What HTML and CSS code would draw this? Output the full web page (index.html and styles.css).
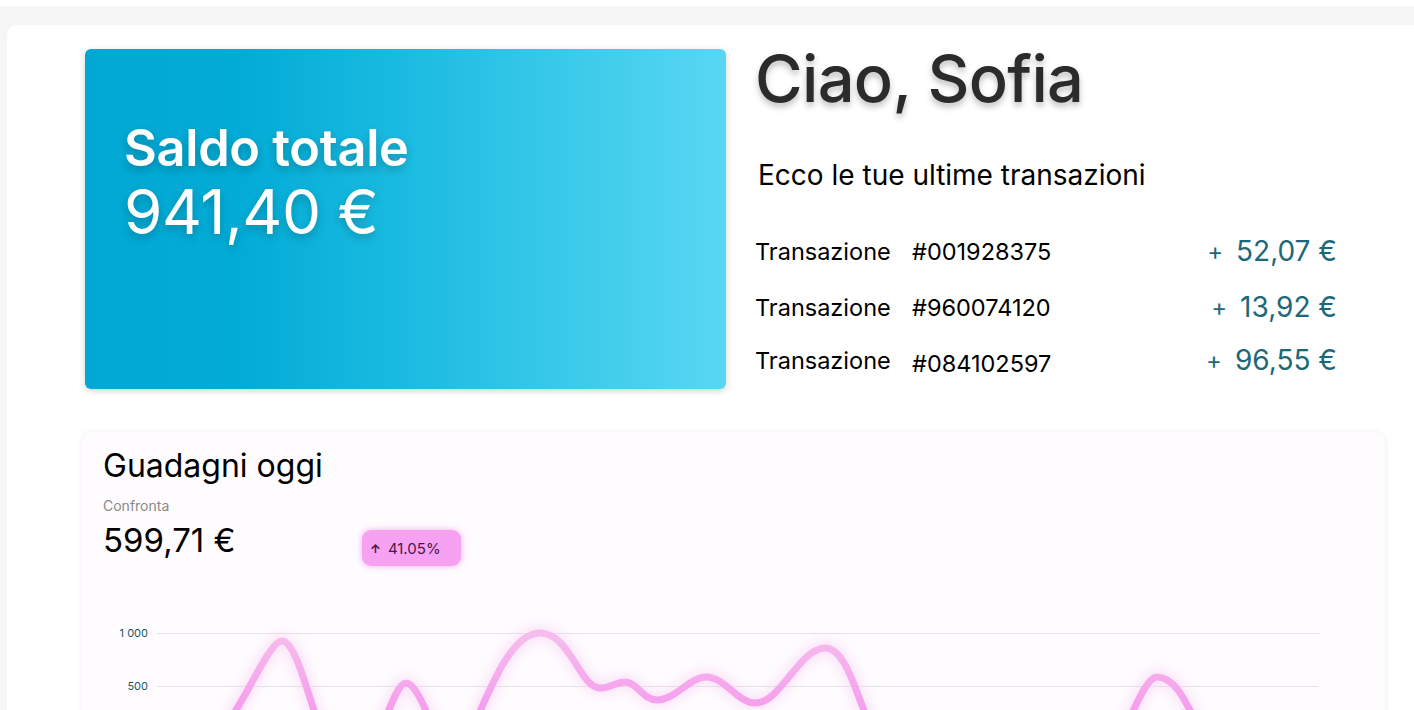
FILE: index.html
```html
<!DOCTYPE html>
<html lang="it">
<head>
<meta charset="utf-8">
<title>Dashboard</title>
<link rel="stylesheet" href="styles.css">
</head>
<body>
<div class="shell">
  <main class="panel">
    <section class="top">
      <div class="balance-card">
        <div class="balance-label">Saldo totale</div>
        <div class="balance-value">941,40 €</div>
      </div>
      <div class="welcome">
        <h1 class="greeting">Ciao, Sofia</h1>
        <p class="subtitle">Ecco le tue ultime transazioni</p>
        <ul class="tx-list">
          <li class="tx"><span class="tx-label">Transazione</span><span class="tx-id">#001928375</span><span class="tx-amount"><span class="tx-plus">+</span>52,07 €</span></li>
          <li class="tx"><span class="tx-label">Transazione</span><span class="tx-id">#960074120</span><span class="tx-amount"><span class="tx-plus">+</span>13,92 €</span></li>
          <li class="tx"><span class="tx-label">Transazione</span><span class="tx-id tx-id-low">#084102597</span><span class="tx-amount"><span class="tx-plus">+</span>96,55 €</span></li>
        </ul>
      </div>
    </section>
    <section class="earnings">
      <h2 class="earn-title">Guadagni oggi</h2>
      <div class="earn-compare">Confronta</div>
      <div class="earn-row">
        <div class="earn-value">599,71 €</div>
        <div class="badge"><span class="badge-arrow">&#8593;</span>41.05%</div>
      </div>
      <svg class="chart" width="1303" height="200" viewBox="0 0 1303 200">
        <defs>
          <linearGradient id="lineGrad" x1="0" y1="0" x2="0" y2="1">
            <stop offset="0" stop-color="#f6bdec"/>
            <stop offset="0.5" stop-color="#f59ded"/>
            <stop offset="1" stop-color="#f48ce9"/>
          </linearGradient>
          <filter id="glow" x="-10%" y="-20%" width="120%" height="140%">
            <feGaussianBlur stdDeviation="6"/>
          </filter>
        </defs>
        <g class="axis">
          <text x="66" y="38" text-anchor="end">1 000</text>
          <text x="66" y="91" text-anchor="end">500</text>
          <line x1="75" y1="34.5" x2="1238" y2="34.5"/>
          <line x1="75" y1="87.5" x2="1236" y2="87.5"/>
          <line x1="75" y1="140.5" x2="1236" y2="140.5"/>
        </g>
        <g transform="translate(-82,-599)">
          <path class="curve-glow" filter="url(#glow)" d="M 160 780 C 220 780, 262 641, 282 641 C 302 641, 320 760, 345 780 C 370 790, 390 683, 406 683 C 422 683, 440 760, 455 760 C 475 740, 500 633, 540 633 C 570 633, 580 688, 600 688 C 612 688, 615 682, 625 682 C 637 682, 643 700, 657 700 C 675 700, 690 677, 706 677 C 725 677, 737 703, 756 703 C 780 703, 800 648, 825 648 C 845 648, 855 690, 866 715 C 900 790, 1000 800, 1090 780 C 1120 760, 1140 677, 1157 677 C 1175 677, 1185 700, 1200 730 C 1230 790, 1280 760, 1320 750"/>
          <path class="curve" d="M 160 780 C 220 780, 262 641, 282 641 C 302 641, 320 760, 345 780 C 370 790, 390 683, 406 683 C 422 683, 440 760, 455 760 C 475 740, 500 633, 540 633 C 570 633, 580 688, 600 688 C 612 688, 615 682, 625 682 C 637 682, 643 700, 657 700 C 675 700, 690 677, 706 677 C 725 677, 737 703, 756 703 C 780 703, 800 648, 825 648 C 845 648, 855 690, 866 715 C 900 790, 1000 800, 1090 780 C 1120 760, 1140 677, 1157 677 C 1175 677, 1185 700, 1200 730 C 1230 790, 1280 760, 1320 750"/>
        </g>
      </svg>
    </section>
  </main>
</div>
</body>
</html>
```

FILE: styles.css
```css
* { box-sizing: border-box; }
html, body { margin: 0; padding: 0; background: #ffffff; }
body {
  font-family: Inter, "Noto Sans", "Liberation Sans", sans-serif;
  color: #000;
  padding-top: 6px;
}
.shell {
  background: #f6f6f6;
  padding: 19px 0 0 7px;
}
.panel {
  background: #ffffff;
  border-radius: 10px 0 0 0;
  padding: 24px 0 40px 75px;
  min-height: 900px;
}
.top {
  display: flex;
  gap: 29px;
  align-items: flex-start;
}
.balance-card {
  width: 641px;
  height: 340px;
  margin-left: 3px;
  border-radius: 6px;
  background: linear-gradient(to right, #00a8d3 0%, #03acd6 25%, #1bbbe1 50%, #3acae9 75%, #58d7f3 100%);
  box-shadow: 0 2px 6px rgba(0, 0, 0, 0.18);
  padding: 70px 0 0 39px;
  color: #fff;
  text-shadow: 0 4px 8px rgba(0, 0, 0, 0.22);
}
.balance-label {
  font-size: 50.5px;
  font-weight: 600;
  line-height: 58px;
  letter-spacing: -0.3px;
}
.balance-value {
  font-size: 62px;
  font-weight: 400;
  line-height: 70px;
  letter-spacing: -0.5px;
}
.welcome {
  width: 582px;
}
.greeting {
  margin: 0;
  font-size: 65px;
  font-weight: 500;
  line-height: 60px;
  color: #2b2b2b;
  letter-spacing: -0.7px;
  text-shadow: 0 4px 6px rgba(0, 0, 0, 0.25);
}
.subtitle {
  margin: 49px 0 0 3px;
  font-size: 28px;
  line-height: 34px;
  font-weight: 400;
}
.tx-list {
  list-style: none;
  margin: 42px 0 0 0;
  padding: 0;
  display: flex;
  flex-direction: column;
  gap: 22px;
}
.tx {
  display: flex;
  align-items: center;
  height: 34px;
  font-size: 23.5px;
}
.tx + .tx:last-child { margin-top: -3px; }
.tx-label { width: 157px; }
.tx-id { flex: 1; }
.tx-id-low { position: relative; top: 3px; }
.tx-amount {
  color: #1c6878;
  font-size: 28px;
  text-align: right;
  display: flex;
  align-items: center;
}
.tx-plus {
  font-size: 24px;
  margin-right: 13px;
}
.earnings {
  margin: 43px 0 0 0;
  width: 1303px;
  background: #fefcfe;
  border-radius: 10px;
  box-shadow: 0 0 6px rgba(0, 0, 0, 0.07);
  padding: 14px 0 0 0;
  height: 420px;
}
.earn-title {
  margin: 0 0 0 21px;
  font-size: 32px;
  font-weight: 400;
  line-height: 40px;
}
.earn-compare {
  margin: 11px 0 0 21px;
  font-size: 14px;
  color: #8a8a8a;
  line-height: 18px;
}
.earn-row {
  display: flex;
  align-items: flex-start;
  margin: 6px 0 0 21px;
}
.earn-value {
  width: 259px;
  font-size: 33px;
  line-height: 38px;
}
.badge {
  margin-top: 9px;
  height: 36px;
  width: 99px;
  border-radius: 9px;
  background: #f7a1f3;
  box-shadow: 0 0 6px rgba(246, 150, 238, 0.8);
  color: #4a1746;
  font-size: 15px;
  display: flex;
  align-items: center;
  padding-left: 8px;
  gap: 7px;
}
.badge-arrow {
  font-size: 12px;
  font-weight: 700;
}
.chart {
  display: block;
  margin-top: 33px;
  overflow: visible;
}
.axis text {
  font-size: 11px;
  fill: #17596a;
  font-family: Inter, "Noto Sans", sans-serif;
}
.axis line {
  stroke: #e6e2e6;
  stroke-width: 1;
}
.curve {
  fill: none;
  stroke: url(#lineGrad);
  stroke-width: 7;
  stroke-linecap: round;
}
.curve-glow {
  fill: none;
  stroke: #f7c2f2;
  stroke-width: 14;
  opacity: 0.45;
}
```
